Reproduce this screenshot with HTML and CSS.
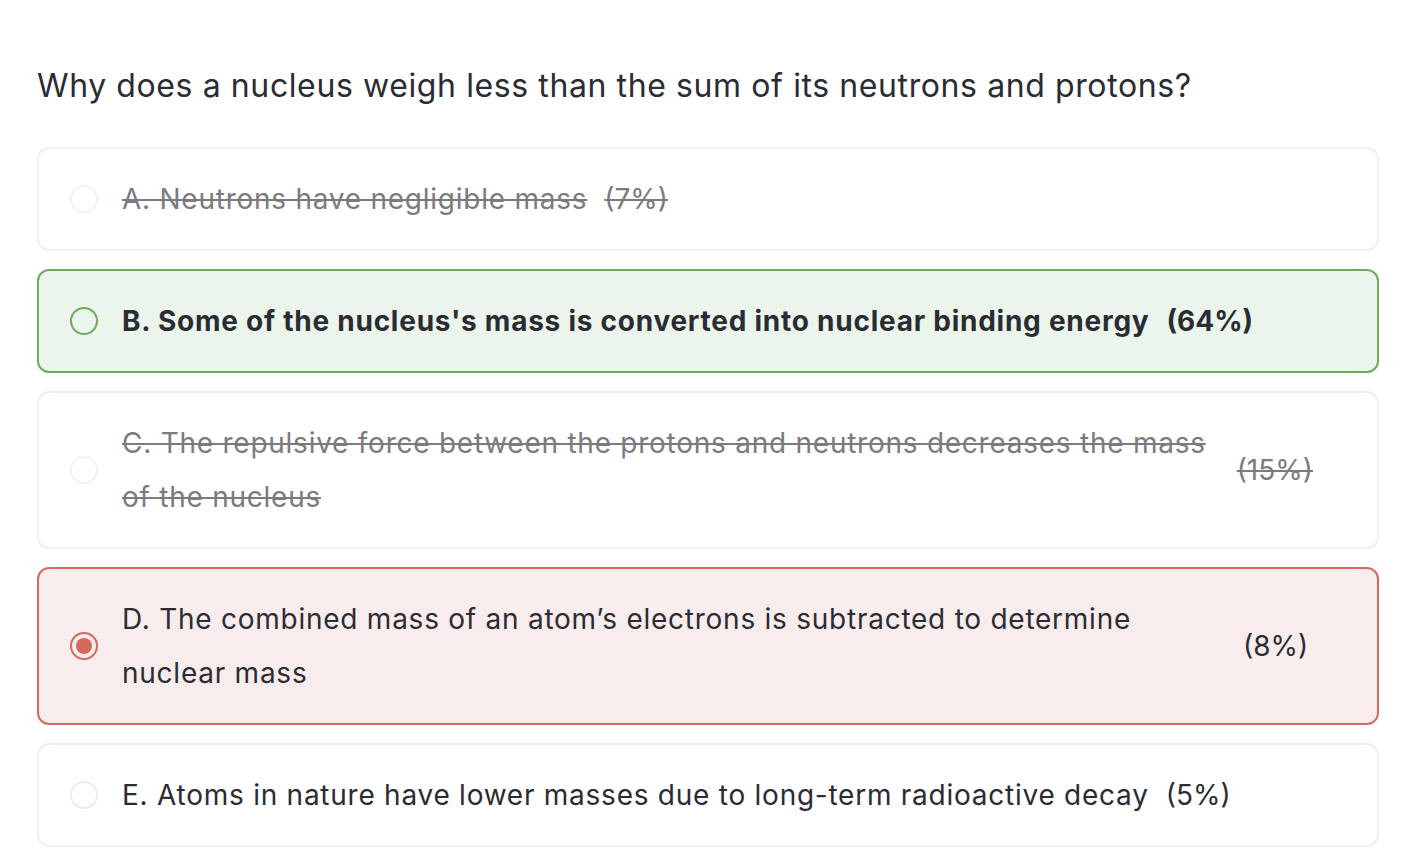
FILE: index.html
```html
<!DOCTYPE html>
<html>
<head>
<meta name="viewport" content="width=device-width, initial-scale=1">
<link rel="stylesheet" href="styles.css">
</head>
<body>
<div id="quiz">

<h2 class="question">Why does a nucleus weigh less than the sum of its neutrons and protons?</h2>

<div class="choice eliminated">
  <span class="radio"></span>
  <span class="answer">A. Neutrons have negligible mass</span>
  <span class="percent">(7%)</span>
</div>

<div class="choice correct">
  <span class="radio"></span>
  <span class="answer">B. Some of the nucleus's mass is converted into nuclear binding energy</span>
  <span class="percent">(64%)</span>
</div>

<div class="choice eliminated">
  <span class="radio"></span>
  <span class="answer">C. The repulsive force between the protons and neutrons decreases the mass of the nucleus</span>
  <span class="percent">(15%)</span>
</div>

<div class="choice wrong">
  <span class="radio"></span>
  <span class="answer">D. The combined mass of an atom’s electrons is subtracted to determine nuclear mass</span>
  <span class="percent">(8%)</span>
</div>

<div class="choice">
  <span class="radio"></span>
  <span class="answer">E. Atoms in nature have lower masses due to long-term radioactive decay</span>
  <span class="percent">(5%)</span>
</div>

</div>
</body>
</html>
```

FILE: styles.css
```css
body {
  margin: 0;
  font-family: "Inter", sans-serif;
  color: #2b2c33;
  background-color: #ffffff;
}

#quiz {
  width: 1342px;
  margin-left: 37px;
  padding-top: 66px;
}

.question {
  margin: 0 0 41px 0;
  font-size: 32px;
  font-weight: 400;
  line-height: 40px;
  letter-spacing: 0.6px;
}

/* answer cards */
.choice {
  display: flex;
  align-items: center;
  border: 2px solid #f0f0f0;
  border-radius: 12px;
  padding: 23px 64px 23px 31px;
  margin-bottom: 18px;
  font-size: 28px;
  line-height: 54px;
  letter-spacing: 0.75px;
}

.radio {
  flex-shrink: 0;
  box-sizing: border-box;
  width: 28px;
  height: 28px;
  border: 2px solid #ececec;
  border-radius: 50%;
  margin-right: 24px;
  position: relative;
}

.answer {
  flex: 0 1 auto;
}

.percent {
  flex-shrink: 0;
  min-width: 70px;
  margin-left: 17px;
  letter-spacing: 0;
}

/* crossed out answers */
.eliminated .answer,
.eliminated .percent {
  color: #7b7b7f;
  text-decoration: line-through;
  text-decoration-thickness: 2px;
}

.eliminated .radio {
  border-color: #f2f2f2;
}

/* right answer */
.correct {
  background-color: #ebf5ec;
  border-color: #72a962;
  font-weight: 700;
}

.correct .radio {
  border-color: #72a962;
}

/* picked, but wrong */
.wrong {
  background-color: #f9ecec;
  border-color: #d5695d;
}

.wrong .radio {
  border-color: #d5695d;
}

.wrong .radio:after {
  content: "";
  position: absolute;
  left: 4px;
  top: 4px;
  width: 16px;
  height: 16px;
  border-radius: 50%;
  background-color: #d5695d;
}
```
